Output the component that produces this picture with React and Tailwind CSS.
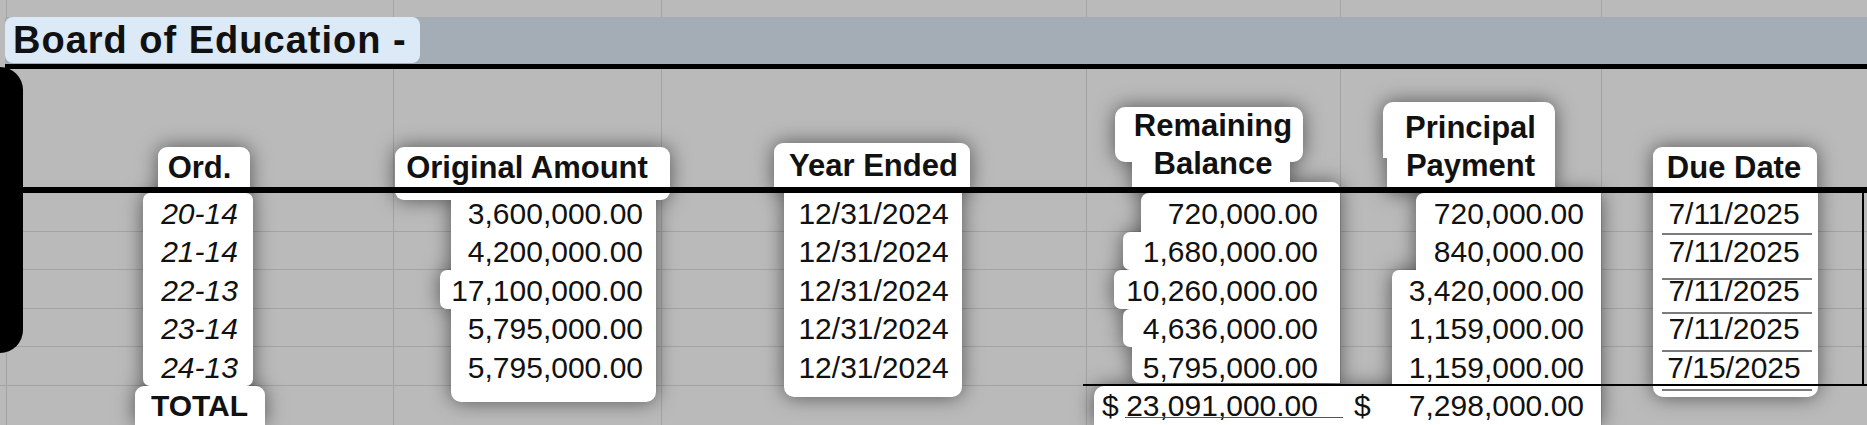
import React from 'react';

const DATA = [
  ['20-14', '3,600,000.00', '12/31/2024', '720,000.00', '720,000.00', '7/11/2025'],
  ['21-14', '4,200,000.00', '12/31/2024', '1,680,000.00', '840,000.00', '7/11/2025'],
  ['22-13', '17,100,000.00', '12/31/2024', '10,260,000.00', '3,420,000.00', '7/11/2025'],
  ['23-14', '5,795,000.00', '12/31/2024', '4,636,000.00', '1,159,000.00', '7/11/2025'],
  ['24-13', '5,795,000.00', '12/31/2024', '5,795,000.00', '1,159,000.00', '7/15/2025'],
];

const ROWS = ['row-start-3', 'row-start-4', 'row-start-5', 'row-start-6', 'row-start-7'];
const VLINES = ['col-start-2', 'col-start-3', 'col-start-4', 'col-start-5', 'col-start-6', 'col-start-7'];

// gray underlines under the due dates, offset from each row's top
const DUE_LINES = [
  'row-start-4 mt-[1.5px]',
  'row-start-5 mt-[8px]',
  'row-start-6 mt-[3px]',
  'row-start-7 mt-[3px]',
  'row-start-8 mt-[3px]',
];

function Seg({ className }) {
  return <div className={`shrink-0 bg-white ${className}`} />;
}

function Gap({ className }) {
  return <div className={`shrink-0 ${className}`} />;
}

function Highlights() {
  return (
    <div className="col-start-1 col-end-8 row-start-1 row-end-9 flex drop-shadow-[0_0_10px_rgba(0,0,0,0.55)]">
      <div className="w-[6px] shrink-0" />

      <div className="w-[387px] shrink-0 flex flex-col">
        <Gap className="h-[78px]" />
        <Seg className="ml-[152px] w-[92px] h-[46px] rounded-t-[9px]" />
        <Seg className="ml-[137px] w-[110px] h-[193px] rounded-[7px]" />
        <Seg className="ml-[129px] w-[130px] h-[39px] rounded-t-[9px]" />
      </div>

      <div className="w-[268px] shrink-0 flex flex-col">
        <Gap className="h-[78px]" />
        <Seg className="ml-[2px] w-[275px] h-[53px] rounded-[9px]" />
        <Seg className="ml-[58px] w-[205px] h-[70px]" />
        <Seg className="ml-[47px] w-[216px] h-[39px] rounded-l-[7px]" />
        <Seg className="ml-[58px] w-[205px] h-[93px] rounded-b-[10px]" />
      </div>

      <div className="w-[425px] shrink-0 flex flex-col">
        <Gap className="h-[74px]" />
        <Seg className="ml-[113px] w-[196px] h-[50px] rounded-t-[9px] rounded-b-[4px]" />
        <Seg className="ml-[123px] w-[178px] h-[204px] rounded-b-[10px]" />
      </div>

      <div className="w-[254px] shrink-0 flex flex-col">
        <Gap className="h-[38px]" />
        <Seg className="ml-[29px] w-[188px] h-[55px] rounded-[10px]" />
        <Seg className="ml-[46px] w-[158px] h-[20px]" />
        <Seg className="ml-[46px] w-[208px] h-[11px] rounded-tr-[8px]" />
        <Seg className="ml-[55px] w-[199px] h-[38.6px] rounded-tl-[8px]" />
        <Seg className="ml-[37px] w-[217px] h-[38.6px] rounded-l-[7px]" />
        <Seg className="ml-[28px] w-[226px] h-[38.6px] rounded-l-[7px]" />
        <Seg className="ml-[37px] w-[217px] h-[38.6px] rounded-l-[7px]" />
        <Seg className="ml-[46px] w-[208px] h-[35.6px] rounded-bl-[8px]" />
        <Gap className="h-[3px]" />
        <Seg className="ml-[8px] w-[246px] h-[39px] rounded-tl-[10px]" />
      </div>

      <div className="w-[261px] shrink-0 flex flex-col">
        <Gap className="h-[33px]" />
        <Seg className="ml-[43px] w-[172px] h-[56px] rounded-t-[10px]" />
        <Seg className="ml-[47px] w-[168px] h-[35px] rounded-br-[6px]" />
        <Seg className="ml-[76px] w-[185px] h-[77.2px] rounded-tl-[8px]" />
        <Seg className="ml-[52px] w-[209px] h-[115.8px] rounded-tl-[7px]" />
        <Seg className="w-[261px] h-[39px]" />
      </div>

      <div className="w-[266px] shrink-0 flex flex-col">
        <Gap className="h-[78px]" />
        <Seg className="ml-[52px] w-[164px] h-[46px] rounded-t-[9px]" />
        <Seg className="ml-[52px] w-[165px] h-[204px] rounded-b-[10px]" />
      </div>
    </div>
  );
}

export default function App() {
  const cell = 'relative flex items-start pt-[5.5px] text-[30px] leading-[30px]';
  const head = 'relative row-start-1 flex items-end justify-center text-center text-[31px] leading-[38px] font-bold';

  return (
    <div className="relative w-[1867px] h-[425px] overflow-hidden bg-[#bababa] text-[#111] font-['Liberation_Sans',Arial,sans-serif]">
      {/* top sheet row */}
      <div className="flex h-[17px]">
        <div className="w-[6px]" />
        <div className="w-[387px] border-l border-[#a5a5a5]" />
        <div className="w-[268px] border-l border-[#a5a5a5]" />
        <div className="w-[425px] border-l border-[#a5a5a5]" />
        <div className="w-[254px] border-l border-[#a5a5a5]" />
        <div className="w-[261px] border-l border-[#a5a5a5]" />
        <div className="w-[266px] border-l border-[#a5a5a5]" />
      </div>

      {/* title band */}
      <div className="ml-[5px] h-[47px] bg-[#a4adb5]">
        <div className="inline-block h-[46px] rounded-[8px] bg-[#dce9f6] pl-[8px] pr-[13px] pt-[2px] text-[38px] leading-[42px] font-bold tracking-[1px]">
          Board of Education -
        </div>
      </div>
      <div className="ml-[5px] h-[5px] bg-black" />

      {/* table body */}
      <div className="grid grid-cols-[6px_387px_268px_425px_254px_261px_266px] grid-rows-[118px_6px_repeat(5,38.6px)_39px]">
        {VLINES.map((c) => (
          <div key={c} className={`${c} row-start-1 row-end-9 border-l border-[#a3a3a3]`} />
        ))}
        {ROWS.map((r) => (
          <div key={r} className={`${r} col-start-1 col-end-8 border-b border-[#a3a3a3]`} />
        ))}

        <Highlights />

        <div className={`${head} col-start-2`}>Ord.</div>
        <div className={`${head} col-start-3`}>Original Amount</div>
        <div className={`${head} col-start-4 pb-[2px]`}>Year Ended</div>
        <div className={`${head} col-start-5 pb-[4px]`}>
          Remaining
          <br />
          Balance
        </div>
        <div className={`${head} col-start-6 pb-[2px]`}>
          Principal
          <br />
          Payment
        </div>
        <div className={`${head} col-start-7`}>Due Date</div>

        {DATA.map((row, i) => (
          <React.Fragment key={i}>
            <div className={`${cell} ${ROWS[i]} col-start-2 justify-center italic`}>{row[0]}</div>
            <div className={`${cell} ${ROWS[i]} col-start-3 justify-end pr-[18px]`}>{row[1]}</div>
            <div className={`${cell} ${ROWS[i]} col-start-4 justify-center`}>{row[2]}</div>
            <div className={`${cell} ${ROWS[i]} col-start-5 justify-end pr-[22px]`}>{row[3]}</div>
            <div className={`${cell} ${ROWS[i]} col-start-6 justify-end pr-[17px]`}>{row[4]}</div>
            <div className={`${cell} ${ROWS[i]} col-start-7 justify-center`}>{row[5]}</div>
          </React.Fragment>
        ))}

        {DUE_LINES.map((l) => (
          <div key={l} className={`relative ${l} col-start-7 self-start ml-[61px] w-[150px] h-[2px] bg-[#7b7b7b]`} />
        ))}

        {/* totals */}
        <div className={`${cell} row-start-8 col-start-2 justify-center font-bold`}>TOTAL</div>
        <div className={`${cell} row-start-8 col-start-5 justify-between pl-[16px] pr-[22px]`}>
          <span>$</span>
          <span>23,091,000.00</span>
        </div>
        <div className="relative row-start-8 col-start-5 self-start mt-[31px] ml-[39px] w-[218px] h-[1.5px] bg-[#555]" />
        <div className={`${cell} row-start-8 col-start-6 justify-between pl-[14px] pr-[17px]`}>
          <span>$</span>
          <span>7,298,000.00</span>
        </div>

        {/* heavy rules */}
        <div className="relative row-start-2 col-start-1 col-end-8 bg-black" />
        <div className="relative row-start-7 col-start-5 col-end-8 self-end -ml-[3px] h-[2px] bg-black" />
        <div className="relative row-start-3 row-end-8 col-start-7 justify-self-end mr-[3px] w-[2px] bg-black" />
      </div>

      {/* dark edge on the left */}
      <div className="absolute left-0 top-[67px] w-[23px] h-[286px] rounded-r-[24px] bg-black" />
    </div>
  );
}
